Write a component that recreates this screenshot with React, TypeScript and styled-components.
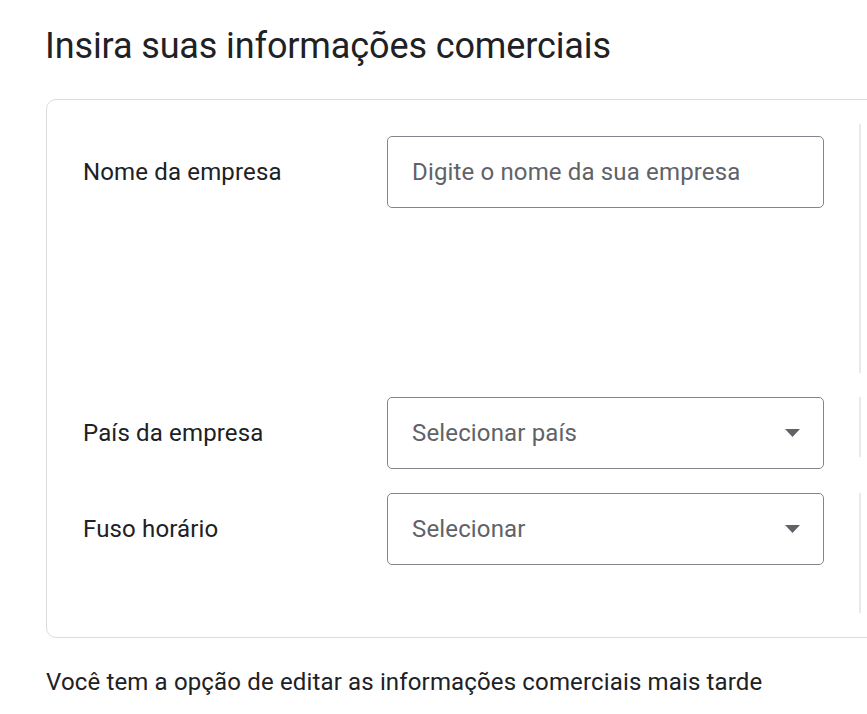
import React from 'react'
import styled, { createGlobalStyle } from 'styled-components'

const GlobalStyle = createGlobalStyle`
  body {
    margin: 0;
    background: #fff;
    overflow: hidden;
  }
`

interface Field {
  label: string
  placeholder: string
  kind: 'text' | 'select'
  offset: number
  asideHeight: number
}

const fields: Field[] = [
  {
    label: 'Nome da empresa',
    placeholder: 'Digite o nome da sua empresa',
    kind: 'text',
    offset: 12,
    asideHeight: 249,
  },
  {
    label: 'País da empresa',
    placeholder: 'Selecionar país',
    kind: 'select',
    offset: 0,
    asideHeight: 60,
  },
  {
    label: 'Fuso horário',
    placeholder: 'Selecionar',
    kind: 'select',
    offset: 0,
    asideHeight: 120,
  },
]

const Caret = () => (
  <svg width="15" height="8" viewBox="0 0 15 8" aria-hidden="true">
    <path d="M0 0h15L7.5 8z" fill="#5f6368" />
  </svg>
)

const App: React.FC = () => {
  return (
    <>
      <GlobalStyle />
      <Page>
        <Title>Insira suas informações comerciais</Title>
        <Card>
          {fields.map(field => (
            <Row key={field.label}>
              <Label $offset={field.offset}>{field.label}</Label>
              <Control $offset={field.offset}>
                {field.kind === 'text' ? (
                  <TextInput placeholder={field.placeholder} />
                ) : (
                  <SelectBox type="button">
                    <span>{field.placeholder}</span>
                    <Caret />
                  </SelectBox>
                )}
              </Control>
              <Aside $height={field.asideHeight} />
            </Row>
          ))}
        </Card>
        <Note>Você tem a opção de editar as informações comerciais mais tarde</Note>
      </Page>
    </>
  )
}

export default App

// Styles
const Page = styled.main`
  padding: 25px 0 0 46px;
  font-family: Roboto, 'Noto Sans', Arial, sans-serif;
  color: #202124;
  letter-spacing: 0.15px;
`

const Title = styled.h1`
  margin: 0 0 32px -1px;
  font-size: 36px;
  font-weight: 400;
  line-height: 42px;
  letter-spacing: -0.12px;
  color: #202124;
`

const Card = styled.section`
  width: 1100px;
  box-sizing: border-box;
  border: 1px solid #dadce0;
  border-radius: 10px;
  padding: 24px 0 24px 36px;
  display: flex;
  flex-direction: column;
  gap: 24px;
`

const Row = styled.div`
  display: grid;
  grid-template-columns: 304px 437px 1fr;
  align-items: start;
`

const Label = styled.label<{ $offset: number }>`
  margin-top: ${p => p.$offset}px;
  font-size: 24px;
  line-height: 72px;
  color: #202124;
`

const Control = styled.div<{ $offset: number }>`
  margin-top: ${p => p.$offset}px;
`

const fieldBase = `
  box-sizing: border-box;
  width: 100%;
  height: 72px;
  border: 1px solid #80868b;
  border-radius: 5px;
  background: #fff;
  font-family: Roboto, 'Noto Sans', Arial, sans-serif;
  font-size: 24px;
  letter-spacing: 0.15px;
  color: #202124;
  outline: none;
`

const TextInput = styled.input`
  ${fieldBase}
  padding: 0 24px;

  &::placeholder {
    color: #5f6368;
  }
`

const SelectBox = styled.button`
  ${fieldBase}
  padding: 0 23px 0 24px;
  display: flex;
  align-items: center;
  justify-content: space-between;
  color: #5f6368;
  text-align: left;
  cursor: pointer;
`

const Aside = styled.div<{ $height: number }>`
  height: ${p => p.$height}px;
  margin-left: 35px;
  border-left: 2px solid #e8eaed;
`

const Note = styled.p`
  margin: 30px 0 0;
  font-size: 24px;
  line-height: 28px;
  color: #202124;
`
